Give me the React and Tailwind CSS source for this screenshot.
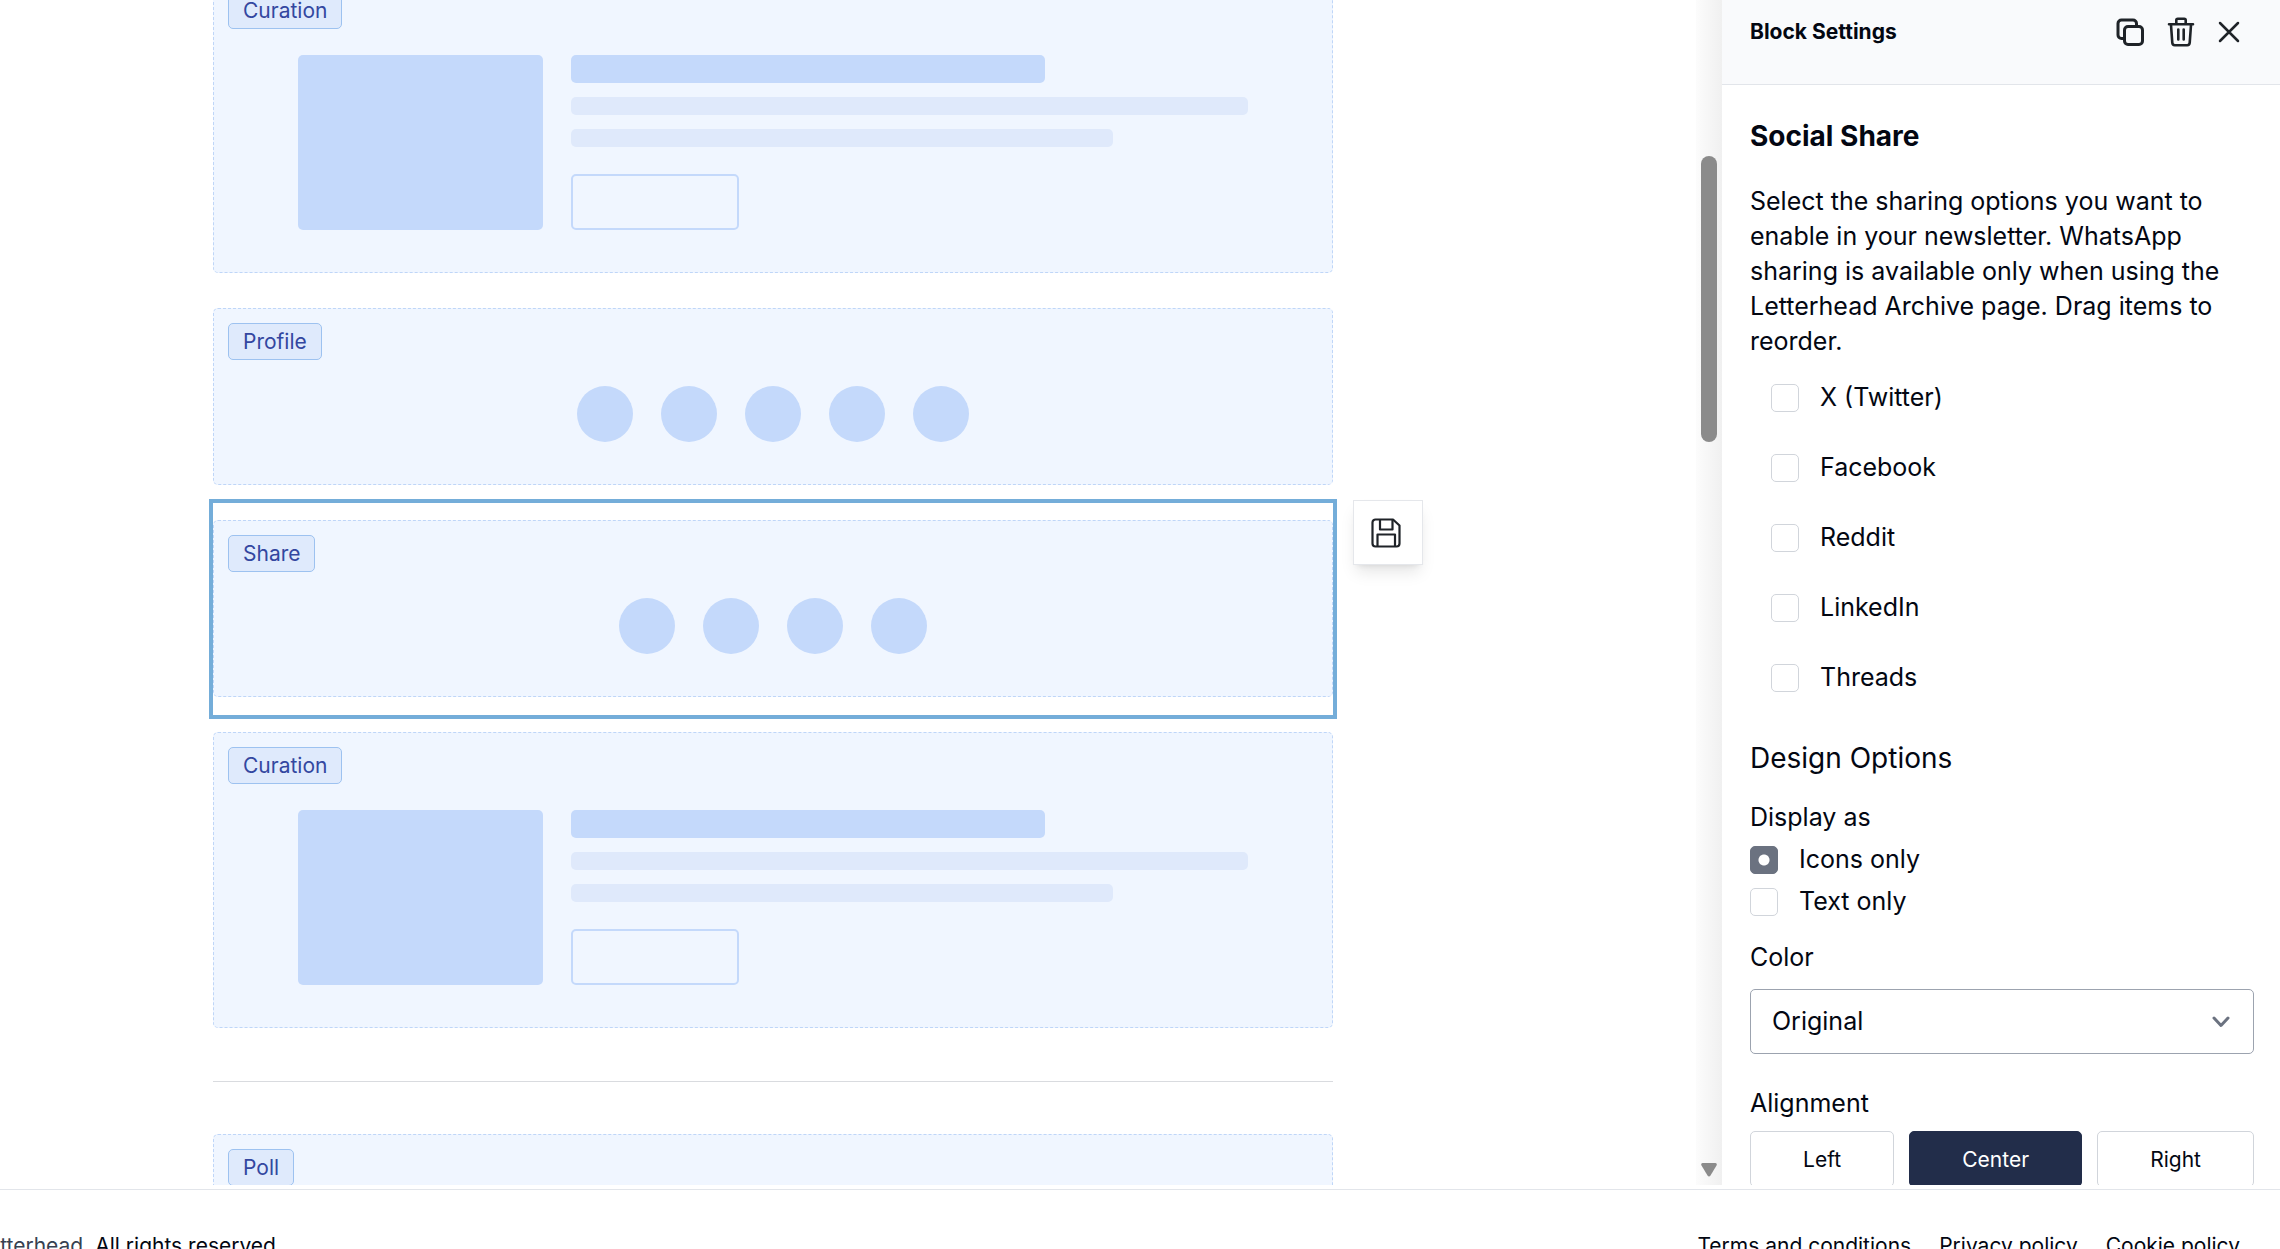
import { useState } from 'react';

const shareOptions = ['X (Twitter)', 'Facebook', 'Reddit', 'LinkedIn', 'Threads'];
const displayOptions = ['Icons only', 'Text only'];
const alignments = ['Left', 'Center', 'Right'];
const footerLinks = ['Terms and conditions', 'Privacy policy', 'Cookie policy'];

const CopyIcon = () => (
  <svg className="size-7" viewBox="0 0 28 28" fill="none" stroke="currentColor" strokeWidth="3" strokeLinejoin="round" strokeLinecap="round">
    <rect x="8.500" y="8.500" width="18" height="18" rx="3.500" />
    <path d="M7.500 20.500H5.500A3.500 3.500 0 0 1 2 17V5.500A3.500 3.500 0 0 1 5.500 2H17A3.500 3.500 0 0 1 20.500 5.500V7.500" />
  </svg>
);

const TrashIcon = () => (
  <svg className="h-[30px] w-7" viewBox="0 0 28 30" fill="none" stroke="currentColor" strokeWidth="2.600" strokeLinejoin="round" strokeLinecap="round">
    <path d="M2 7.300H26M9.300 7V3.200A1.500 1.500 0 0 1 10.800 1.700H17.200A1.500 1.500 0 0 1 18.700 3.200V7M4 8L5.300 25.800A2.500 2.500 0 0 0 7.800 28.200H20.200A2.500 2.500 0 0 0 22.700 25.800L24 8M11.300 12.500V22.500M16.700 12.500V22.500" />
  </svg>
);

const CloseIcon = () => (
  <svg className="size-[22px]" viewBox="0 0 22 22" fill="none" stroke="currentColor" strokeWidth="2.500" strokeLinecap="round">
    <path d="M2 2L20 20M20 2L2 20" />
  </svg>
);

const SaveIcon = () => (
  <svg className="size-[30px]" viewBox="0 0 30 30" fill="none" stroke="currentColor" strokeWidth="2.200" strokeLinejoin="round">
    <path d="M4.500 1.500H22L28.500 7.500V25.500A3 3 0 0 1 25.500 28.500H4.500A3 3 0 0 1 1.500 25.500V4.500A3 3 0 0 1 4.500 1.500Z" />
    <path d="M9 2V11.500H21.500V2M6.500 28V16.500H24V28" />
  </svg>
);

const Block = ({ label, children }) => (
  <div className="rounded-[5px] border border-dashed border-[#bfd6f8] bg-[#f0f6ff] px-[14px] pt-[14px] pb-[42px]">
    <span className="inline-flex h-[37px] items-center rounded-[5px] border border-[#9dc2f0] bg-[#dfeafc] px-[14px] text-[21px] text-[#3347a0]">
      {label}
    </span>
    <div className="mt-[26px] px-[70px]">{children}</div>
  </div>
);

const CurationBlock = () => (
  <Block label="Curation">
    <div className="flex gap-7">
      <div className="h-[175px] w-[245px] shrink-0 rounded-[5px] bg-[#c4d9fb]" />
      <div className="flex flex-1 flex-col gap-[14px]">
        <div className="h-7 w-[70%] rounded-[5px] bg-[#c4d9fb]" />
        <div className="h-[18px] rounded-[5px] bg-[#dfe9fb]" />
        <div className="h-[18px] w-[80%] rounded-[5px] bg-[#dfe9fb]" />
        <div className="mt-auto h-14 w-[168px] rounded-[5px] border-2 border-[#c4d9fb]" />
      </div>
    </div>
  </Block>
);

const CirclesBlock = ({ label, count }) => (
  <Block label={label}>
    <div className="flex justify-center gap-7">
      {Array.from({ length: count }, (_, i) => (
        <div key={i} className="size-14 rounded-full bg-[#c4d9fb]" />
      ))}
    </div>
  </Block>
);

const PollBlock = () => (
  <Block label="Poll">
    <div className="h-[175px] rounded-[5px] bg-[#c4d9fb]" />
  </Block>
);

const Canvas = () => (
  <main className="flex flex-1 flex-col items-center overflow-hidden pr-[150px]">
    {/* the list is scrolled a little past its first block's top edge */}
    <div className="-mt-10 w-full max-w-[1120px] shrink-0">
      <div className="pt-[17px] pb-[18px]">
        <CurationBlock />
      </div>
      <div className="pt-[17px] pb-[18px]">
        <CirclesBlock label="Profile" count={5} />
      </div>
      <div className="relative pt-[17px] pb-[18px] outline-4 outline-[#74add9]">
        <CirclesBlock label="Share" count={4} />
        <button
          aria-label="Save block"
          className="absolute top-[-3px] left-full ml-5 flex h-[65px] w-[70px] items-center justify-center border border-[#e5e7eb] bg-white pr-1 text-[#1f2328] shadow-lg"
        >
          <SaveIcon />
        </button>
      </div>
      <div className="pt-[17px] pb-[18px]">
        <CurationBlock />
      </div>
      <hr className="my-[35px] border-[#d9dbdf]" />
      <div className="pt-[17px] pb-[18px]">
        <PollBlock />
      </div>
    </div>
  </main>
);

const ScrollTrack = () => (
  <div className="flex w-[26px] shrink-0 flex-col items-center justify-between bg-linear-to-r from-[#fcfcfc] to-[#f0f0f0] pt-[156px] pb-2">
    <div className="h-[286px] w-4 rounded-full bg-[#8b8b8b]" />
    <svg className="h-[14px] w-4" viewBox="0 0 16 14" fill="#8b8b8b">
      <path d="M1.500 0H14.500Q16.500 .5 15.500 2.500L9.500 12.500Q8 14.500 6.500 12.500L.5 2.500Q-.5 .5 1.500 0Z" />
    </svg>
  </div>
);

const tick = 'size-7 shrink-0 appearance-none rounded-[5px] border border-[#d1d5db] bg-white';

const SettingsPanel = () => {
  const [networks, setNetworks] = useState([]);
  const [display, setDisplay] = useState('Icons only');
  const [alignment, setAlignment] = useState('Center');

  const toggleNetwork = (name) => {
    setNetworks((prev) => (prev.includes(name) ? prev.filter((n) => n !== name) : [...prev, name]));
  };

  return (
    <aside className="flex w-[558px] shrink-0 flex-col overflow-hidden bg-white">
      <header className="flex h-[85px] shrink-0 items-start justify-between border-b border-[#e2e5ea] bg-[#f9fafc] pt-4 pr-10 pl-7">
        <h2 className="text-[21px] leading-8 font-bold">Block Settings</h2>
        <div className="flex h-8 items-center gap-[23px] text-[#1f2328]">
          <button aria-label="Duplicate block"><CopyIcon /></button>
          <button aria-label="Delete block"><TrashIcon /></button>
          <button aria-label="Close settings"><CloseIcon /></button>
        </div>
      </header>

      <div className="pt-8 pr-[26px] pl-7 text-[25px] leading-[35px]">
        <h3 className="text-[28px] leading-[39px] font-bold">Social Share</h3>
        <p className="mt-7">
          Select the sharing options you want to enable in your newsletter. WhatsApp sharing is available only when
          using the Letterhead Archive page. Drag items to reorder.
        </p>

        <ul className="mt-[21px] flex flex-col gap-[35px] pl-[21px]">
          {shareOptions.map((name) => (
            <li key={name}>
              <label className="flex items-center gap-[21px]">
                <input
                  type="checkbox"
                  checked={networks.includes(name)}
                  onChange={() => toggleNetwork(name)}
                  className={`${tick} checked:bg-[#6b7280]`}
                />
                {name}
              </label>
            </li>
          ))}
        </ul>

        <h3 className="mt-[42px] text-[28px] leading-[42px]">Design Options</h3>

        <fieldset className="mt-[21px]">
          <legend>Display as</legend>
          <div className="mt-[7px] flex flex-col gap-[7px]">
            {displayOptions.map((name) => (
              <label key={name} className="flex items-center gap-[21px]">
                <input
                  type="radio"
                  name="display"
                  checked={display === name}
                  onChange={() => setDisplay(name)}
                  className={`${tick} checked:border-[#6b7280] checked:bg-[#6b7280] checked:bg-[radial-gradient(circle,white_5px,transparent_6px)]`}
                />
                {name}
              </label>
            ))}
          </div>
        </fieldset>

        <label htmlFor="color" className="mt-[21px] block">Color</label>
        <div className="relative mt-[14px]">
          <select id="color" className="h-[65px] w-full appearance-none rounded-[5px] border border-[#9ca3af] bg-white px-[21px]">
            <option>Original</option>
            <option>Custom</option>
          </select>
          <svg className="pointer-events-none absolute top-1/2 right-6 h-3 w-[18px] -translate-y-1/2" viewBox="0 0 18 12" fill="none" stroke="#6b7280" strokeWidth="3" strokeLinecap="round" strokeLinejoin="round">
            <path d="M2 2L9 9.500L16 2" />
          </svg>
        </div>

        <p className="mt-8">Alignment</p>
        <div className="mt-[10px] flex gap-[15px]">
          {alignments.map((name) => (
            <button
              key={name}
              onClick={() => setAlignment(name)}
              className={`h-14 flex-auto rounded-[5px] border text-[21px] ${
                alignment === name ? 'border-[#222d4a] bg-[#222d4a] text-white' : 'border-[#d1d5db] bg-white'
              }`}
            >
              {name}
            </button>
          ))}
        </div>
      </div>
    </aside>
  );
};

const Footer = () => (
  <footer className="mt-1 flex h-[60px] shrink-0 items-start justify-between overflow-hidden border-t border-[#e2e5ea] bg-white pt-10 pr-10 text-[21px] leading-8">
    <p className="flex w-[282px] justify-end gap-[6px] whitespace-nowrap">
      <span className="text-[#374151]">© Letterhead.</span>
      <span>All rights reserved.</span>
    </p>
    <nav className="flex gap-7">
      {footerLinks.map((name) => (
        <a key={name} href="#">{name}</a>
      ))}
    </nav>
  </footer>
);

export default function App() {
  return (
    <div className="flex h-screen flex-col overflow-hidden bg-white font-['Inter',sans-serif] text-[#030712]">
      <div className="flex min-h-0 flex-1">
        <Canvas />
        <ScrollTrack />
        <SettingsPanel />
      </div>
      <Footer />
    </div>
  );
}
